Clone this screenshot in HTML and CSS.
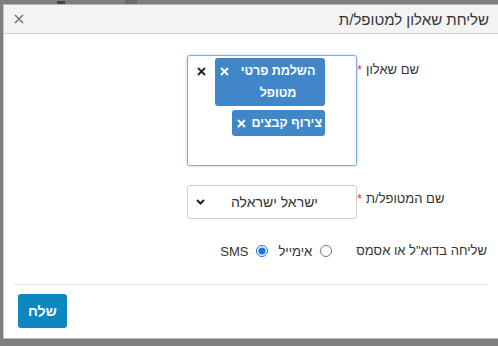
FILE: index.html
```html
<!DOCTYPE html>
<html lang="he" dir="rtl">

<head>
    <meta charset="UTF-8">
    <meta name="viewport" content="width=device-width, initial-scale=1.0">
    <title>שליחת שאלון</title>
    <link rel="stylesheet" href="styles.css">
</head>

<body>
    <!-- page behind the dialog -->
    <div class="page-bar">
        <span class="page-title">דוח בודקות עבודה</span>
        <span class="page-btn"></span>
        <span class="page-icon"></span>
    </div>

    <div class="modal">
        <div class="modal-header">
            <h4 class="modal-title">שליחת שאלון למטופל/ת</h4>
            <button class="close" aria-label="close">
                <svg width="10" height="10" viewBox="0 0 10 10">
                    <path d="M1 1 L9 9 M9 1 L1 9" stroke="#777" stroke-width="1.6" fill="none" />
                </svg>
            </button>
        </div>

        <div class="modal-body">
            <div class="form-row">
                <div class="form-label"><span>שם שאלון</span><span class="req">*</span></div>
                <div class="form-field">
                    <div class="tag-box">
                        <span class="tag">
                            <span class="tag-text">השלמת פרטי מטופל</span>
                            <svg class="tag-x" width="9" height="9" viewBox="0 0 9 9">
                                <path d="M1 1 L8 8 M8 1 L1 8" stroke="#fff" stroke-width="2" fill="none" />
                            </svg>
                        </span>
                        <span class="tag">
                            <span class="tag-text">צירוף קבצים</span>
                            <svg class="tag-x" width="9" height="9" viewBox="0 0 9 9">
                                <path d="M1 1 L8 8 M8 1 L1 8" stroke="#fff" stroke-width="2" fill="none" />
                            </svg>
                        </span>
                        <svg class="tag-clear" width="9" height="9" viewBox="0 0 9 9">
                            <path d="M1 1 L8 8 M8 1 L1 8" stroke="#222" stroke-width="1.8" fill="none" />
                        </svg>
                    </div>
                </div>
            </div>

            <div class="form-row row-select">
                <div class="form-label"><span>שם המטופל/ת</span><span class="req">*</span></div>
                <div class="form-field">
                    <div class="select-box">
                        <span>ישראל ישראלה</span>
                        <svg class="chevron" width="9" height="6" viewBox="0 0 9 6">
                            <path d="M1 1 L4.5 4.5 L8 1" stroke="#222" stroke-width="2" fill="none" />
                        </svg>
                    </div>
                </div>
            </div>

            <div class="form-row row-radio">
                <div class="form-label"><span>שליחה בדוא"ל או אסמס</span></div>
                <div class="form-field radio-group">
                    <label class="radio-item"><input type="radio" name="via">אימייל</label>
                    <label class="radio-item"><input type="radio" name="via" checked>SMS</label>
                </div>
            </div>
        </div>

        <div class="modal-footer">
            <button class="btn-send">שלח</button>
        </div>
    </div>
</body>

</html>
```

FILE: styles.css
```css
/* General */
body {
    font-family: "Liberation Sans", Arial, sans-serif;
    margin: 0;
    padding: 0;
    background: #7f7f7f;
    height: 346px;
    overflow: hidden;
    position: relative;
}

/* Page behind the overlay */
.page-bar {
    display: flex;
    align-items: flex-end;
    height: 4px;
    overflow: hidden;
    padding-right: 190px;
    gap: 20px;
}

.page-title {
    font-size: 16px;
    line-height: 16px;
    color: #3a3a3a;
    margin-bottom: -13px;
}

.page-btn {
    width: 12px;
    height: 4px;
    background: #6a6a6a;
    margin-right: 30px;
}

.page-icon {
    width: 8px;
    height: 3px;
    background: #444;
    margin-right: 40px;
}

/* Dialog */
.modal {
    position: absolute;
    top: 4px;
    left: 3px;
    width: 497px;
    background: #fff;
    border: 1px solid #b5b5b5;
    border-left-color: #c8c8c8;
    box-sizing: border-box;
}

.modal-header {
    display: flex;
    align-items: center;
    justify-content: space-between;
    height: 28px;
    padding: 0 10px;
    background: #f3f3f3;
    border-bottom: 1px solid #cfcfcf;
}

.modal-title {
    margin: 0;
    font-size: 15px;
    font-weight: normal;
    color: #333;
}

.close {
    border: none;
    background: none;
    padding: 0;
    width: 10px;
    height: 10px;
    display: flex;
}

.modal-body {
    padding: 21px 12px 23px 11px;
}

/* Form rows */
.form-row {
    display: flex;
    align-items: flex-start;
}

.row-select {
    margin-top: 19px;
}

.row-radio {
    margin-top: 22px;
    align-items: center;
}

.form-label {
    flex: 0 0 130px;
    display: flex;
    justify-content: flex-end;
    gap: 4px;
    white-space: nowrap;
    font-size: 13px;
    line-height: 20px;
    color: #333;
    padding-top: 5px;
}

.row-select .form-label {
    padding-top: 4px;
}

.row-radio .form-label {
    padding-top: 0;
}

.req {
    color: #e0403a;
}

.form-field {
    flex: 0 0 170px;
}

/* Multi select with tags */
.tag-box {
    position: relative;
    box-sizing: border-box;
    width: 170px;
    height: 111px;
    padding: 2px 31px 2px 26px;
    border: 1px solid #7fa9d7;
    border-radius: 3px;
    box-shadow: 0 0 3px rgba(102, 160, 225, 0.5);
    display: flex;
    flex-wrap: wrap;
    align-content: flex-start;
    align-items: flex-start;
    gap: 4px;
}

.tag {
    display: flex;
    align-items: flex-start;
    gap: 5px;
    padding: 2px 3px 2px 5px;
    background: #3f87c9;
    border-radius: 3px;
    color: #fff;
    font-size: 12.5px;
    font-weight: bold;
    line-height: 22px;
}

.tag-text {
    max-width: 88px;
    text-align: center;
}

.tag-x {
    flex: none;
    margin-top: 7px;
}

.tag-clear {
    position: absolute;
    left: 9px;
    top: 11px;
}

/* Single select */
.select-box {
    box-sizing: border-box;
    width: 170px;
    height: 34px;
    display: flex;
    align-items: center;
    justify-content: space-between;
    padding: 0 38px 0 8px;
    border: 1px solid #ccc;
    border-radius: 3px;
    font-size: 14px;
    color: #333;
}

/* Radios */
.radio-group {
    display: flex;
    align-items: center;
    gap: 10px;
    padding-right: 24px;
    box-sizing: border-box;
}

.radio-item {
    display: flex;
    align-items: center;
    gap: 8px;
    font-size: 13px;
    color: #333;
}

.radio-item input {
    margin: 0;
    width: 12px;
    height: 12px;
    accent-color: #1a73e8;
}

/* Footer */
.modal-footer {
    margin: 0 12px 0 10px;
    padding: 9px 4px 10px;
    border-top: 1px solid #e5e5e5;
    display: flex;
    justify-content: flex-end;
}

.btn-send {
    width: 49px;
    height: 34px;
    border: none;
    border-radius: 3px;
    background: #0e87c1;
    color: #fff;
    font-family: "Liberation Sans", Arial, sans-serif;
    font-size: 14px;
    font-weight: bold;
    cursor: pointer;
}

.btn-send:hover {
    background: #0b6f9f;
}
```
